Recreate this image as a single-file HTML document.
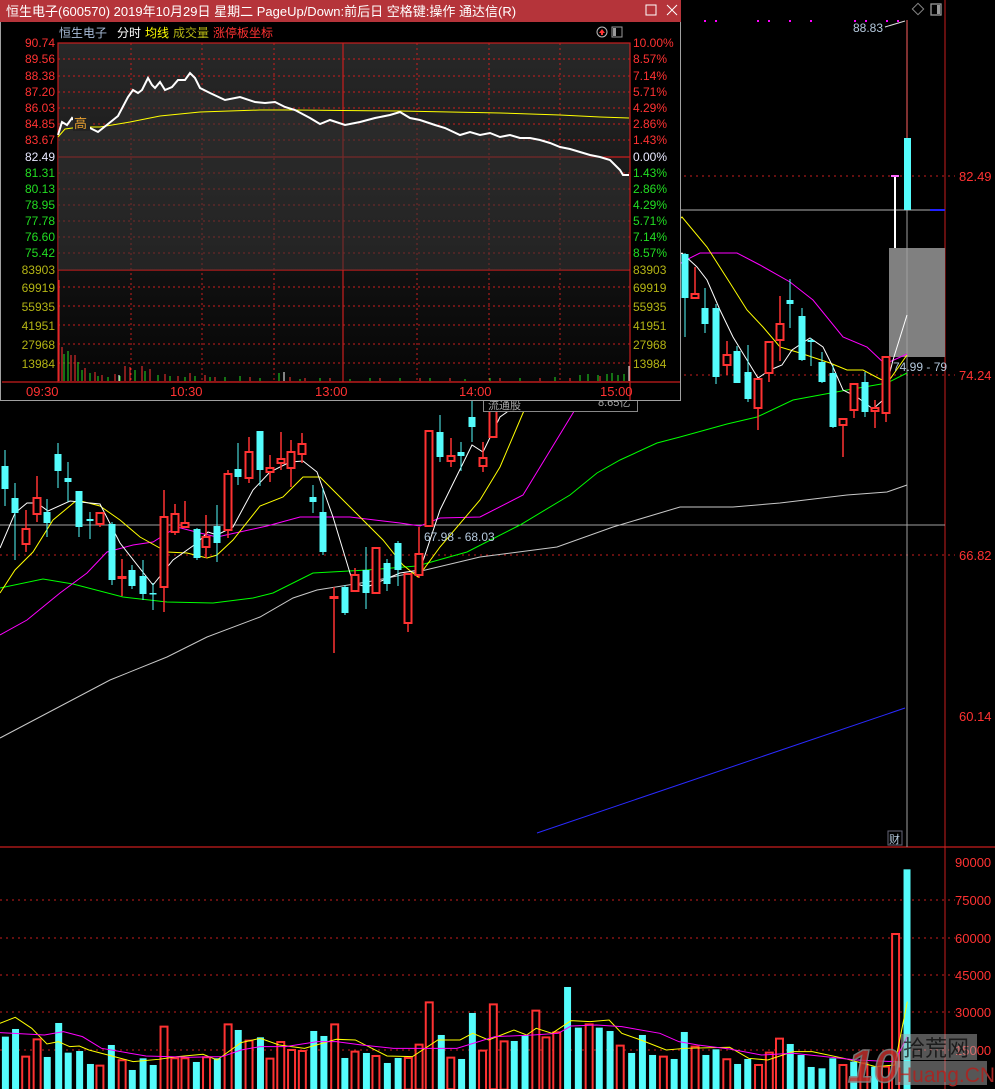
<!DOCTYPE html>
<html><head><meta charset="utf-8"><style>
html,body{margin:0;padding:0;background:#000;}
body{width:995px;height:1089px;overflow:hidden;position:relative;font-family:"Liberation Sans","Noto Sans CJK SC",sans-serif;}
svg{position:absolute;left:0;top:0;}
.c{fill:#54fcfc}.cw{stroke:#54fcfc;stroke-width:1}
.r{fill:#000;stroke:#ff3232;stroke-width:2}.rw{stroke:#ff3232;stroke-width:1.5}
text{font-family:"Liberation Sans","Noto Sans CJK SC",sans-serif;}
</style></head><body>
<svg width="995" height="1089" viewBox="0 0 995 1089">
<line x1="945" y1="0" x2="945" y2="1089" stroke="#c81e1e" stroke-width="1"/>
<line x1="0" y1="847" x2="995" y2="847" stroke="#c81e1e" stroke-width="1.2"/>
<g stroke="#c81e1e" stroke-dasharray="2,4" stroke-width="1">
<line x1="0" y1="176" x2="955" y2="176"/><line x1="0" y1="375" x2="955" y2="375"/><line x1="0" y1="555" x2="955" y2="555"/>
<line x1="0" y1="900" x2="955" y2="900"/><line x1="0" y1="938" x2="955" y2="938"/><line x1="0" y1="975" x2="955" y2="975"/><line x1="0" y1="1012" x2="955" y2="1012"/><line x1="0" y1="1050" x2="955" y2="1050"/>
</g>
<g fill="#ff3232" font-size="13">
<text x="959" y="181">82.49</text><text x="959" y="380">74.24</text><text x="959" y="560">66.82</text><text x="959" y="721">60.14</text>
<text x="955" y="867">90000</text><text x="955" y="905">75000</text><text x="955" y="943">60000</text><text x="955" y="980">45000</text><text x="955" y="1017">30000</text><text x="955" y="1055">15000</text>
</g>
<rect x="889" y="248" width="56" height="109" fill="#808080"/>
<line x1="907" y1="20" x2="907" y2="847" stroke="#a0a0a0" stroke-width="1"/>
<line x1="680" y1="210" x2="930" y2="210" stroke="#b0b0b0" stroke-width="1"/>
<line x1="930" y1="210" x2="945" y2="210" stroke="#2020ff" stroke-width="2"/>
<line x1="0" y1="525" x2="945" y2="525" stroke="#a0a0a0" stroke-width="1"/>
<g fill="#ff00ff"><rect x="704" y="20" width="2" height="2"/><rect x="715" y="20" width="2" height="2"/><rect x="757" y="20" width="2" height="2"/><rect x="768" y="20" width="2" height="2"/><rect x="789" y="20" width="2" height="2"/><rect x="810" y="20" width="2" height="2"/><rect x="854" y="20" width="2" height="2"/><rect x="865" y="20" width="2" height="2"/><rect x="886" y="20" width="2" height="2"/><rect x="897" y="20" width="2" height="2"/></g>
<text x="853" y="32" fill="#b4c8dc" font-size="12">88.83</text>
<line x1="885" y1="27" x2="905" y2="21" stroke="#ddd" stroke-width="1"/>
<rect x="914" y="5" width="8" height="8" transform="rotate(45 918 9)" fill="none" stroke="#888"/>
<rect x="931" y="4" width="10" height="11" fill="none" stroke="#999" stroke-width="1.3"/><rect x="937" y="5" width="3" height="9" fill="#999"/>
<g fill="none" stroke-width="1">
<polyline stroke="#2a2aff" points="537,833 905,708"/>
<polyline stroke="#c8c8c8" points="0,738 110,680 167,657 207,637 260,617 293,598 317,590 367,582 417,572 480,557 557,547 613,527 680,507 733,507 780,503 847,495 887,492 907,485"/>
<polyline stroke="#00ff00" points="0,588 43,579 73,584 123,597 167,602 213,603 253,598 273,593 313,573 367,570 417,566 467,552 520,525 570,495 597,473 620,460 657,443 680,437 727,424 757,417 793,400 847,390 887,383 907,373"/>
<polyline stroke="#ff00ff" points="0,635 27,620 60,593 87,573 107,552 133,545 153,542 177,527 200,533 217,537 267,526 300,517 350,517 400,523 420,526 440,518 480,517 523,495 573,413 620,330 682,262 700,253 737,253 760,265 790,282 813,300 843,337 867,347 885,364 907,354"/>
<polyline stroke="#ffff00" points="0,593 15,570 33,552 53,520 77,500 100,506 120,520 140,537 167,552 187,553 207,558 217,555 233,540 260,506 283,497 303,477 320,477 333,490 360,517 383,540 403,565 418,577 440,547 480,500 500,467 523,413 560,330 682,217 707,247 730,283 747,310 763,327 780,347 800,353 830,363 847,370 863,370 880,379 888,382 907,355"/>
<polyline stroke="#ffffff" points="0,548 15,513 27,503 37,503 48,511 70,501 100,504 120,543 153,585 173,560 197,543 208,532 217,535 233,527 253,490 270,472 290,462 303,461 317,472 333,517 353,583 367,587 400,573 420,570 440,510 472,445 483,452 500,417 507,412 560,330 682,253 697,267 707,280 720,310 733,337 747,360 758,378 770,370 782,365 792,350 810,338 823,347 833,367 843,390 857,397 873,409 883,400 893,360 907,315"/>
</g>
<g>
<line class="cw" x1="5" y1="450" x2="5" y2="506"/><rect class="c" x="1.5" y="466" width="7" height="23"/>
<line class="cw" x1="15" y1="483" x2="15" y2="560"/><rect class="c" x="11.5" y="498" width="7" height="15"/>
<line class="rw" x1="26" y1="510" x2="26" y2="552"/><rect class="r" x="22.5" y="529" width="7" height="15"/>
<line class="rw" x1="37" y1="476" x2="37" y2="522"/><rect class="r" x="33.5" y="498" width="7" height="16"/>
<line class="cw" x1="47" y1="499" x2="47" y2="537"/><rect class="c" x="43.5" y="512" width="7" height="11"/>
<line class="cw" x1="58" y1="443" x2="58" y2="488"/><rect class="c" x="54.5" y="454" width="7" height="17"/>
<line class="cw" x1="68" y1="462" x2="68" y2="502"/><rect class="c" x="64.5" y="478" width="7" height="4"/>
<line class="cw" x1="79" y1="491" x2="79" y2="537"/><rect class="c" x="75.5" y="491" width="7" height="36"/>
<line class="cw" x1="90" y1="512" x2="90" y2="539"/><rect class="c" x="86.5" y="519" width="7" height="2"/>
<line class="rw" x1="100" y1="512" x2="100" y2="527"/><rect class="r" x="96.5" y="513" width="7" height="11"/>
<line class="cw" x1="112" y1="522" x2="112" y2="585"/><rect class="c" x="108.5" y="524" width="7" height="56"/>
<line class="rw" x1="122" y1="559" x2="122" y2="596"/><rect class="r" x="118.5" y="577" width="7" height="1"/>
<line class="cw" x1="132" y1="565" x2="132" y2="589"/><rect class="c" x="128.5" y="570" width="7" height="16"/>
<line class="cw" x1="143" y1="560" x2="143" y2="600"/><rect class="c" x="139.5" y="576" width="7" height="18"/>
<line class="cw" x1="153" y1="583" x2="153" y2="610"/><rect class="c" x="149.5" y="593" width="7" height="1.5"/>
<line class="rw" x1="164" y1="490" x2="164" y2="612"/><rect class="r" x="160.5" y="517" width="7" height="70"/>
<line class="rw" x1="175" y1="504" x2="175" y2="535"/><rect class="r" x="171.5" y="514" width="7" height="18"/>
<line class="rw" x1="185" y1="501" x2="185" y2="528"/><rect class="r" x="181.5" y="523" width="7" height="4"/>
<line class="cw" x1="197" y1="528" x2="197" y2="560"/><rect class="c" x="193.5" y="529" width="7" height="29"/>
<line class="rw" x1="206" y1="515" x2="206" y2="558"/><rect class="r" x="202.5" y="537" width="7" height="10"/>
<line class="cw" x1="217" y1="505" x2="217" y2="562"/><rect class="c" x="213.5" y="526" width="7" height="17"/>
<line class="rw" x1="228" y1="470" x2="228" y2="538"/><rect class="r" x="224.5" y="474" width="7" height="56"/>
<line class="cw" x1="238" y1="443" x2="238" y2="485"/><rect class="c" x="234.5" y="469" width="7" height="8"/>
<line class="rw" x1="249" y1="437" x2="249" y2="483"/><rect class="r" x="245.5" y="452" width="7" height="26"/>
<line class="cw" x1="260" y1="431" x2="260" y2="486"/><rect class="c" x="256.5" y="431" width="7" height="39"/>
<line class="rw" x1="270" y1="455" x2="270" y2="482"/><rect class="r" x="266.5" y="468" width="7" height="4"/>
<line class="rw" x1="281" y1="432" x2="281" y2="470"/><rect class="r" x="277.5" y="459" width="7" height="4"/>
<line class="rw" x1="291" y1="440" x2="291" y2="487"/><rect class="r" x="287.5" y="452" width="7" height="16"/>
<line class="rw" x1="302" y1="433" x2="302" y2="463"/><rect class="r" x="298.5" y="444" width="7" height="10"/>
<line class="cw" x1="313" y1="485" x2="313" y2="513"/><rect class="c" x="309.5" y="497" width="7" height="5"/>
<line class="cw" x1="323" y1="488" x2="323" y2="555"/><rect class="c" x="319.5" y="512" width="7" height="40"/>
<line class="rw" x1="334" y1="587" x2="334" y2="653"/><rect class="r" x="330.5" y="597" width="7" height="1"/>
<line class="cw" x1="345" y1="585" x2="345" y2="615"/><rect class="c" x="341.5" y="587" width="7" height="26"/>
<line class="rw" x1="355" y1="568" x2="355" y2="592"/><rect class="r" x="351.5" y="575" width="7" height="16"/>
<line class="cw" x1="366" y1="547" x2="366" y2="609"/><rect class="c" x="362.5" y="570" width="7" height="23"/>
<line class="rw" x1="376" y1="547" x2="376" y2="593"/><rect class="r" x="372.5" y="548" width="7" height="45"/>
<line class="cw" x1="387" y1="559" x2="387" y2="591"/><rect class="c" x="383.5" y="563" width="7" height="21"/>
<line class="cw" x1="398" y1="541" x2="398" y2="586"/><rect class="c" x="394.5" y="543" width="7" height="27"/>
<line class="rw" x1="408" y1="573" x2="408" y2="632"/><rect class="r" x="404.5" y="574" width="7" height="49"/>
<line class="rw" x1="419" y1="527" x2="419" y2="578"/><rect class="r" x="415.5" y="554" width="7" height="21"/>
<line class="rw" x1="429" y1="430" x2="429" y2="527"/><rect class="r" x="425.5" y="431" width="7" height="95"/>
<line class="cw" x1="440" y1="415" x2="440" y2="462"/><rect class="c" x="436.5" y="432" width="7" height="25"/>
<line class="rw" x1="451" y1="438" x2="451" y2="467"/><rect class="r" x="447.5" y="456" width="7" height="5"/>
<line class="cw" x1="461" y1="442" x2="461" y2="471"/><rect class="c" x="457.5" y="452" width="7" height="4"/>
<line class="cw" x1="472" y1="395" x2="472" y2="442"/><rect class="c" x="468.5" y="417" width="7" height="10"/>
<line class="rw" x1="483" y1="442" x2="483" y2="472"/><rect class="r" x="479.5" y="458" width="7" height="8"/>
<line class="rw" x1="493" y1="400" x2="493" y2="437"/><rect class="r" x="489.5" y="405" width="7" height="32"/>
</g>
<g>
<line class="cw" x1="685" y1="253" x2="685" y2="337"/><rect class="c" x="681.5" y="254" width="7" height="44"/>
<line class="rw" x1="695" y1="267" x2="695" y2="298"/><rect class="r" x="691.5" y="294" width="7" height="4"/>
<line class="cw" x1="705" y1="288" x2="705" y2="333"/><rect class="c" x="701.5" y="308" width="7" height="16"/>
<line class="cw" x1="716" y1="304" x2="716" y2="384"/><rect class="c" x="712.5" y="308" width="7" height="69"/>
<line class="rw" x1="727" y1="341" x2="727" y2="375"/><rect class="r" x="723.5" y="355" width="7" height="10"/>
<line class="cw" x1="737" y1="346" x2="737" y2="383"/><rect class="c" x="733.5" y="351" width="7" height="32"/>
<line class="cw" x1="748" y1="345" x2="748" y2="402"/><rect class="c" x="744.5" y="372" width="7" height="27"/>
<line class="rw" x1="758" y1="378" x2="758" y2="430"/><rect class="r" x="754.5" y="379" width="7" height="29"/>
<line class="rw" x1="769" y1="342" x2="769" y2="382"/><rect class="r" x="765.5" y="342" width="7" height="31"/>
<line class="rw" x1="780" y1="296" x2="780" y2="361"/><rect class="r" x="776.5" y="324" width="7" height="16"/>
<line class="cw" x1="790" y1="279" x2="790" y2="328"/><rect class="c" x="786.5" y="300" width="7" height="4"/>
<line class="cw" x1="802" y1="308" x2="802" y2="361"/><rect class="c" x="798.5" y="316" width="7" height="44"/>
<line class="cw" x1="811" y1="338" x2="811" y2="366"/><rect class="c" x="807.5" y="340" width="7" height="2"/>
<line class="cw" x1="822" y1="352" x2="822" y2="383"/><rect class="c" x="818.5" y="362" width="7" height="20"/>
<line class="cw" x1="833" y1="365" x2="833" y2="428"/><rect class="c" x="829.5" y="373" width="7" height="54"/>
<line class="rw" x1="843" y1="418" x2="843" y2="457"/><rect class="r" x="839.5" y="419" width="7" height="6"/>
<line class="rw" x1="854" y1="383" x2="854" y2="418"/><rect class="r" x="850.5" y="384" width="7" height="26"/>
<line class="cw" x1="865" y1="372" x2="865" y2="417"/><rect class="c" x="861.5" y="382" width="7" height="30"/>
<line class="rw" x1="875" y1="400" x2="875" y2="428"/><rect class="r" x="871.5" y="408" width="7" height="3"/>
<line class="rw" x1="886" y1="357" x2="886" y2="422"/><rect class="r" x="882.5" y="357" width="7" height="56"/>
<rect x="894" y="176" width="2" height="72" fill="#fff"/><rect x="891" y="175" width="8" height="2" fill="#ff66ff"/>
<line x1="907" y1="20" x2="907" y2="138" stroke="#ff6060" stroke-width="1"/>
<rect class="c" x="904" y="138" width="7" height="72"/>
</g>
<text x="893" y="371" fill="#b4c8dc" font-size="12">74.99 - 79</text>
<text x="424" y="541" fill="#b4c8dc" font-size="12">67.98 - 68.03</text>
<rect x="888" y="831" width="14" height="14" fill="#000" stroke="#667"/><text x="889" y="843" fill="#b4c8dc" font-size="11">财</text>
<rect x="483.5" y="395.5" width="154" height="16" fill="#000" stroke="#888"/>
<text x="488" y="409" fill="#aaa" font-size="11">流通股</text><text x="598" y="406" fill="#aaa" font-size="11">8.65亿</text>
<g transform="translate(0,840) scale(0.6345,0.3333)">
<g fill="#54fcfc">
<rect x="3" y="590" width="11" height="160"/><rect x="19" y="567" width="11" height="180"/><rect x="69" y="651" width="11" height="100"/><rect x="87" y="549" width="11" height="200"/><rect x="102" y="638" width="11" height="110"/><rect x="120" y="633" width="11" height="115"/><rect x="137" y="672" width="11" height="80"/><rect x="170" y="615" width="11" height="135"/><rect x="203" y="690" width="11" height="60"/><rect x="220" y="655" width="11" height="95"/><rect x="236" y="675" width="11" height="75"/><rect x="304" y="666" width="11" height="85"/><rect x="337" y="655" width="11" height="95"/><rect x="370" y="570" width="11" height="180"/><rect x="405" y="592" width="11" height="160"/><rect x="489" y="573" width="11" height="175"/><rect x="505" y="588" width="11" height="160"/><rect x="538" y="654" width="11" height="95"/><rect x="572" y="639" width="11" height="110"/><rect x="605" y="669" width="11" height="80"/><rect x="622" y="654" width="11" height="95"/><rect x="690" y="585" width="11" height="165"/><rect x="722" y="657" width="11" height="95"/><rect x="739" y="519" width="11" height="230"/><rect x="805" y="603" width="11" height="145"/><rect x="822" y="585" width="11" height="165"/><rect x="889" y="441" width="11" height="310"/><rect x="906" y="563" width="11" height="185"/><rect x="939" y="563" width="11" height="185"/><rect x="956" y="573" width="11" height="175"/><rect x="990" y="639" width="11" height="110"/><rect x="1007" y="585" width="11" height="165"/><rect x="1023" y="645" width="11" height="105"/><rect x="1057" y="657" width="11" height="95"/><rect x="1073" y="576" width="11" height="175"/><rect x="1107" y="645" width="11" height="105"/><rect x="1123" y="628" width="11" height="120"/><rect x="1157" y="672" width="11" height="80"/><rect x="1173" y="657" width="11" height="95"/><rect x="1240" y="612" width="11" height="140"/><rect x="1257" y="645" width="11" height="105"/><rect x="1273" y="681" width="11" height="70"/><rect x="1290" y="685" width="11" height="65"/><rect x="1307" y="655" width="11" height="95"/><rect x="1340" y="665" width="11" height="85"/><rect x="1373" y="680" width="11" height="70"/><rect x="1424" y="88" width="11" height="665"/>
</g>
<g fill="#000" stroke="#ff3232">
<rect x="35" y="650" width="11" height="100" stroke-width="2" vector-effect="non-scaling-stroke"/><rect x="53" y="598" width="11" height="155" stroke-width="2" vector-effect="non-scaling-stroke"/><rect x="152" y="677" width="11" height="75" stroke-width="2" vector-effect="non-scaling-stroke"/><rect x="187" y="661" width="11" height="90" stroke-width="2" vector-effect="non-scaling-stroke"/><rect x="253" y="560" width="11" height="190" stroke-width="2" vector-effect="non-scaling-stroke"/><rect x="270" y="655" width="11" height="95" stroke-width="2" vector-effect="non-scaling-stroke"/><rect x="286" y="655" width="11" height="95" stroke-width="2" vector-effect="non-scaling-stroke"/><rect x="320" y="652" width="11" height="100" stroke-width="2" vector-effect="non-scaling-stroke"/><rect x="354" y="553" width="11" height="200" stroke-width="2" vector-effect="non-scaling-stroke"/><rect x="387" y="602" width="11" height="150" stroke-width="2" vector-effect="non-scaling-stroke"/><rect x="420" y="656" width="11" height="95" stroke-width="2" vector-effect="non-scaling-stroke"/><rect x="437" y="606" width="11" height="145" stroke-width="2" vector-effect="non-scaling-stroke"/><rect x="454" y="630" width="11" height="120" stroke-width="2" vector-effect="non-scaling-stroke"/><rect x="471" y="633" width="11" height="120" stroke-width="2" vector-effect="non-scaling-stroke"/><rect x="522" y="553" width="11" height="200" stroke-width="2" vector-effect="non-scaling-stroke"/><rect x="554" y="635" width="11" height="115" stroke-width="2" vector-effect="non-scaling-stroke"/><rect x="587" y="648" width="11" height="105" stroke-width="2" vector-effect="non-scaling-stroke"/><rect x="638" y="654" width="11" height="95" stroke-width="2" vector-effect="non-scaling-stroke"/><rect x="655" y="614" width="11" height="135" stroke-width="2" vector-effect="non-scaling-stroke"/><rect x="671" y="487" width="11" height="265" stroke-width="2" vector-effect="non-scaling-stroke"/><rect x="705" y="653" width="11" height="95" stroke-width="2" vector-effect="non-scaling-stroke"/><rect x="755" y="632" width="11" height="120" stroke-width="2" vector-effect="non-scaling-stroke"/><rect x="772" y="493" width="11" height="255" stroke-width="2" vector-effect="non-scaling-stroke"/><rect x="789" y="604" width="11" height="145" stroke-width="2" vector-effect="non-scaling-stroke"/><rect x="839" y="512" width="11" height="240" stroke-width="2" vector-effect="non-scaling-stroke"/><rect x="855" y="592" width="11" height="160" stroke-width="2" vector-effect="non-scaling-stroke"/><rect x="872" y="577" width="11" height="175" stroke-width="2" vector-effect="non-scaling-stroke"/><rect x="923" y="553" width="11" height="200" stroke-width="2" vector-effect="non-scaling-stroke"/><rect x="972" y="617" width="11" height="135" stroke-width="2" vector-effect="non-scaling-stroke"/><rect x="1040" y="650" width="11" height="100" stroke-width="2" vector-effect="non-scaling-stroke"/><rect x="1090" y="620" width="11" height="130" stroke-width="2" vector-effect="non-scaling-stroke"/><rect x="1140" y="658" width="11" height="95" stroke-width="2" vector-effect="non-scaling-stroke"/><rect x="1190" y="675" width="11" height="75" stroke-width="2" vector-effect="non-scaling-stroke"/><rect x="1207" y="638" width="11" height="115" stroke-width="2" vector-effect="non-scaling-stroke"/><rect x="1223" y="596" width="11" height="155" stroke-width="2" vector-effect="non-scaling-stroke"/><rect x="1323" y="675" width="11" height="75" stroke-width="2" vector-effect="non-scaling-stroke"/><rect x="1356" y="670" width="11" height="80" stroke-width="2" vector-effect="non-scaling-stroke"/><rect x="1390" y="680" width="11" height="70" stroke-width="2" vector-effect="non-scaling-stroke"/><rect x="1406" y="282" width="11" height="470" stroke-width="2" vector-effect="non-scaling-stroke"/>
</g>
<polyline fill="none" stroke="#ffff00" stroke-width="1" vector-effect="non-scaling-stroke" points="0,550 24,532 50,565 74,612 92,605 110,620 125,618 140,630 180,650 210,665 250,658 280,650 320,643 342,660 380,608 410,595 440,615 480,625 530,598 560,600 610,648 650,650 690,600 725,600 745,580 770,600 810,570 830,585 845,565 870,580 900,542 930,545 960,540 980,580 1010,600 1050,630 1080,625 1150,622 1180,655 1210,660 1250,635 1280,635 1330,655 1380,680 1410,675 1430,485"/>
<polyline fill="none" stroke="#ff00ff" stroke-width="1" vector-effect="non-scaling-stroke" points="0,578 70,585 100,575 130,590 160,625 230,648 300,652 350,650 380,630 410,620 450,620 500,605 530,605 570,615 620,625 660,625 720,625 780,590 840,585 880,580 900,558 940,555 980,560 1040,580 1070,605 1100,615 1150,627 1200,645 1250,640 1300,650 1350,660 1410,665 1430,590"/>
</g>
<g opacity="0.85">
<text x="848" y="1082" font-size="46" font-weight="bold" fill="#c0302c" stroke="#888" stroke-width="1.5" font-style="italic">10</text>
<rect x="901" y="1034" width="76" height="26" fill="#aaa" opacity="0.6"/>
<text x="903" y="1056" font-size="22" fill="#222">拾荒网</text>
<rect x="895" y="1061" width="92" height="24" fill="#aaa" opacity="0.6"/>
<text x="897" y="1082" font-size="21" fill="#c0302c">Huang.CN</text>
</g>

<defs><linearGradient id="g" x1="0" y1="0" x2="0" y2="1"><stop offset="0" stop-color="#282828"/><stop offset="1" stop-color="#060606"/></linearGradient></defs>
<rect x="0.5" y="0.5" width="680" height="400" fill="#000" stroke="#a0a0a0"/>
<rect x="0" y="0" width="681" height="22" fill="#b5343a"/>
<text x="6" y="16" fill="#fff" font-size="13">恒生电子(600570) 2019年10月29日 星期二 PageUp/Down:前后日 空格键:操作 通达信(R)</text>
<rect x="646" y="5" width="10" height="10" fill="none" stroke="#fff" stroke-width="1"/>
<path d="M667 5 L677 15 M677 5 L667 15" stroke="#fff" stroke-width="1"/>
<text x="59" y="37" font-size="12" fill="#a8bcd8">恒生电子</text>
<text x="117" y="37" font-size="12" fill="#fff">分时</text>
<text x="145" y="37" font-size="12" fill="#ffff00">均线</text>
<text x="173" y="37" font-size="12" fill="#b4b414">成交量</text>
<text x="213" y="37" font-size="12" fill="#ff3232">涨停板坐标</text>
<circle cx="602" cy="32" r="5" fill="none" stroke="#bbb"/><path d="M599 33 L602 29 L605 33 Z M601 33 h2 v2 h-2z" fill="#ff3232"/>
<rect x="612" y="27" width="10" height="10" fill="none" stroke="#999"/><rect x="613" y="28" width="3" height="8" fill="#999"/>
<rect x="58" y="43" width="572" height="339" fill="url(#g)"/>
<g stroke="#c81e1e" stroke-dasharray="2,3" stroke-width="1">
<line x1="58" y1="59" x2="630" y2="59"/><line x1="58" y1="76" x2="630" y2="76"/><line x1="58" y1="92" x2="630" y2="92"/><line x1="58" y1="108" x2="630" y2="108"/><line x1="58" y1="124" x2="630" y2="124"/><line x1="58" y1="140" x2="630" y2="140"/><line x1="58" y1="173" x2="630" y2="173"/><line x1="58" y1="189" x2="630" y2="189"/><line x1="58" y1="205" x2="630" y2="205"/><line x1="58" y1="221" x2="630" y2="221"/><line x1="58" y1="237" x2="630" y2="237"/><line x1="58" y1="253" x2="630" y2="253"/>
<line x1="58" y1="287" x2="630" y2="287"/><line x1="58" y1="306" x2="630" y2="306"/><line x1="58" y1="325" x2="630" y2="325"/><line x1="58" y1="344" x2="630" y2="344"/><line x1="58" y1="363" x2="630" y2="363"/>
<line x1="131" y1="43" x2="131" y2="382"/><line x1="202" y1="43" x2="202" y2="382"/><line x1="274" y1="43" x2="274" y2="382"/><line x1="417" y1="43" x2="417" y2="382"/><line x1="489" y1="43" x2="489" y2="382"/><line x1="560" y1="43" x2="560" y2="382"/>
</g>
<g stroke="#c81e1e" stroke-width="1.2" fill="none">
<rect x="58" y="43" width="572" height="339"/>
<line x1="58" y1="157" x2="630" y2="157"/><line x1="58" y1="270" x2="630" y2="270"/>
<line x1="343" y1="43" x2="343" y2="382"/><line x1="2" y1="382" x2="680" y2="382"/><line x1="630" y1="382" x2="630" y2="400"/>
</g>
<polygon fill="#333" opacity="0.55" points="58,135 62,122 67,125 72,118 80,127 90,128 98,132 108,124 118,116 128,97 133,90 138,93 142,90 148,78 152,85 155,88 160,82 165,90 172,87 178,80 185,80 190,73 195,78 200,88 210,93 225,100 240,97 255,102 265,103 275,102 285,107 295,110 310,118 320,124 330,120 345,125 360,122 375,118 390,115 400,112 410,118 420,120 435,125 445,128 460,135 470,132 480,135 490,133 500,137 510,135 520,138 530,138 540,140 550,143 560,147 570,149 580,152 590,155 600,157 610,160 620,170 623,175 629,175 629,270 58,270"/>
<polyline fill="none" stroke="#ffff00" stroke-width="1" points="58,137 65,129 80,127 100,127 130,122 160,116 200,112 260,110 290,110 400,111 500,113 560,115 600,117 629,118"/>
<polyline fill="none" stroke="#ffffff" stroke-width="2" points="58,135 62,122 67,125 72,118 80,127 90,128 98,132 108,124 118,116 128,97 133,90 138,93 142,90 148,78 152,85 155,88 160,82 165,90 172,87 178,80 185,80 190,73 195,78 200,88 210,93 225,100 240,97 255,102 265,103 275,102 285,107 295,110 310,118 320,124 330,120 345,125 360,122 375,118 390,115 400,112 410,118 420,120 435,125 445,128 460,135 470,132 480,135 490,133 500,137 510,135 520,138 530,138 540,140 550,143 560,147 570,149 580,152 590,155 600,157 610,160 620,170 623,175 629,175"/>
<rect x="73" y="115" width="17" height="16" fill="#222"/><text x="74" y="128" font-size="13" fill="#e8a030">高</text>
<path stroke="#ff3232" stroke-width="1" d="M59 381V280M62 381V347M71 381V355M75 381V355M85 381V368M95 381V372M102 381V375M115 381V374M125 381V366M130 381V367M142 381V366M150 381V369M165 381V374M178 381V376M190 381V373M205 381V375M215 381V377M250 381V377M290 381V377M305 381V378M330 381V378M380 381V378M420 381V378M450 381V378M500 381V378M540 381V378M570 381V378M600 381V376"/>
<path stroke="#22dd22" stroke-width="1" d="M64 381V354M68 381V351M78 381V362M82 381V370M90 381V373M98 381V376M108 381V377M120 381V376M135 381V370M145 381V371M158 381V375M170 381V376M185 381V377M195 381V376M210 381V377M225 381V377M240 381V376M260 381V378M279 381V373M300 381V379M320 381V378M350 381V379M370 381V378M400 381V378M430 381V378M465 381V379M490 381V378M520 381V378M555 381V377M580 381V375M588 381V374M598 381V375M607 381V374M612 381V373M618 381V375M624 381V374"/>
<path stroke="#fff" stroke-width="1" d="M119 381V375M284 381V372M629 381V366"/>
<g font-size="12">
<g fill="#ff3232" text-anchor="end">
<text x="55" y="47">90.74</text><text x="55" y="63">89.56</text><text x="55" y="80">88.38</text><text x="55" y="96">87.20</text><text x="55" y="112">86.03</text><text x="55" y="128">84.85</text><text x="55" y="144">83.67</text>
</g>
<text x="55" y="161" fill="#e8e8ff" text-anchor="end">82.49</text>
<g fill="#22dd22" text-anchor="end">
<text x="55" y="177">81.31</text><text x="55" y="193">80.13</text><text x="55" y="209">78.95</text><text x="55" y="225">77.78</text><text x="55" y="241">76.60</text><text x="55" y="257">75.42</text>
</g>
<g fill="#b4b414" text-anchor="end">
<text x="55" y="274">83903</text><text x="55" y="292">69919</text><text x="55" y="311">55935</text><text x="55" y="330">41951</text><text x="55" y="349">27968</text><text x="55" y="368">13984</text>
</g>
<g fill="#ff3232">
<text x="633" y="47">10.00%</text><text x="633" y="63">8.57%</text><text x="633" y="80">7.14%</text><text x="633" y="96">5.71%</text><text x="633" y="112">4.29%</text><text x="633" y="128">2.86%</text><text x="633" y="144">1.43%</text>
</g>
<text x="633" y="161" fill="#e8e8ff">0.00%</text>
<g fill="#22dd22">
<text x="633" y="177">1.43%</text><text x="633" y="193">2.86%</text><text x="633" y="209">4.29%</text><text x="633" y="225">5.71%</text><text x="633" y="241">7.14%</text><text x="633" y="257">8.57%</text>
</g>
<g fill="#b4b414">
<text x="633" y="274">83903</text><text x="633" y="292">69919</text><text x="633" y="311">55935</text><text x="633" y="330">41951</text><text x="633" y="349">27968</text><text x="633" y="368">13984</text>
</g>
<g fill="#ff3232" font-size="13">
<text x="26" y="396">09:30</text><text x="170" y="396">10:30</text><text x="315" y="396">13:00</text><text x="459" y="396">14:00</text><text x="600" y="396">15:00</text>
</g>
</g>
</svg>
</body></html>
